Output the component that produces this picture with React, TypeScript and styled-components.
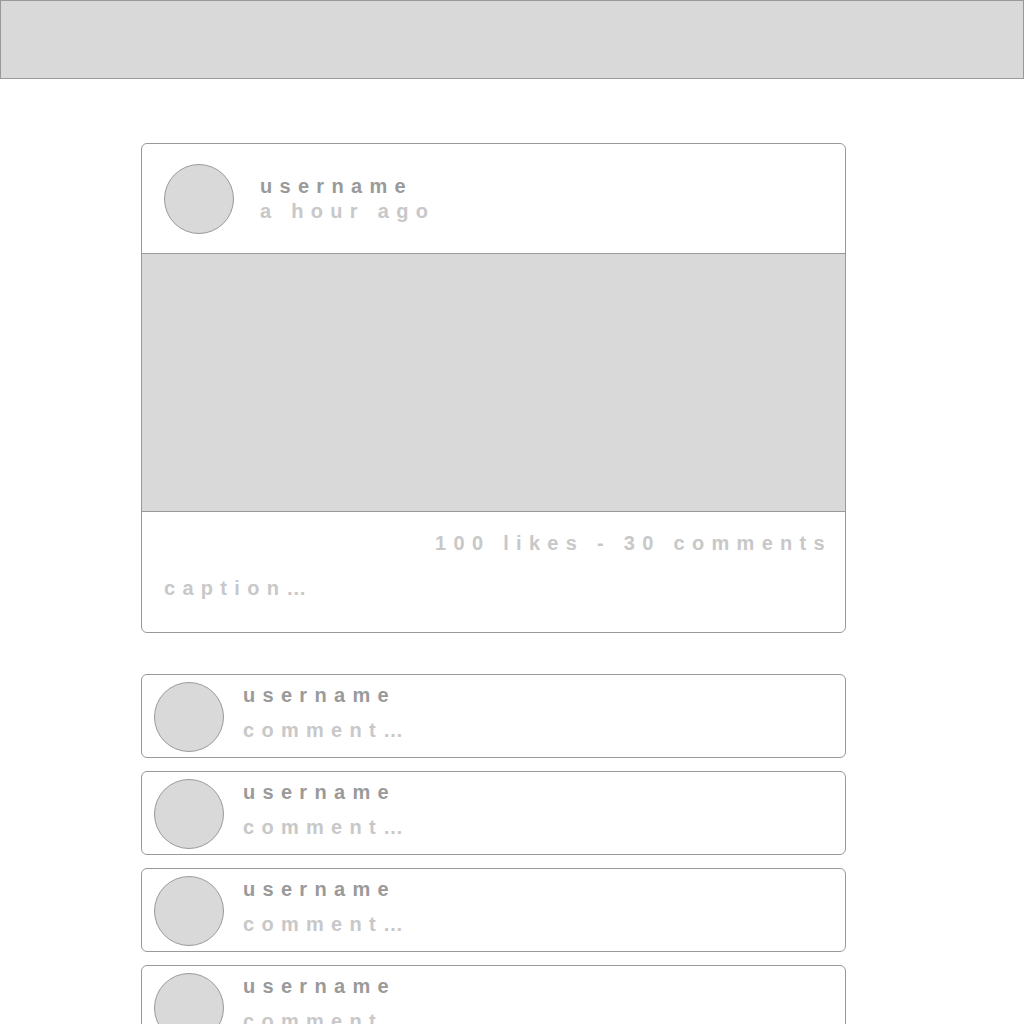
import React from "react";
import styled, { createGlobalStyle } from "styled-components";

const Global = createGlobalStyle`
  html, body { margin: 0; padding: 0; background: #fff; }
  body { font-family: "Liberation Sans", Arial, sans-serif; }
`;

const TopBar = styled.header`
  height: 77px;
  background: #d9d9d9;
  border: 1px solid #999;
`;

const Main = styled.main`
  width: 705px;
  margin: 64px 0 0 141px;
  display: flex;
  flex-direction: column;
`;

const Card = styled.section`
  border: 1px solid #999;
  border-radius: 6px;
  overflow: hidden;
  background: #fff;
`;

const PostHeader = styled.div`
  display: flex;
  align-items: center;
  gap: 26px;
  padding: 20px 22px 19px;
  border-bottom: 1px solid #999;
`;

const Avatar = styled.div`
  width: 68px;
  height: 68px;
  border-radius: 50%;
  background: #d9d9d9;
  border: 1px solid #999;
  flex-shrink: 0;
`;

const Meta = styled.div<{ $gap: number; $top?: boolean }>`
  display: flex;
  flex-direction: column;
  gap: ${(p) => p.$gap}px;
  margin-top: -1px;
  ${(p) => (p.$top ? "align-self: flex-start; margin-top: 1px;" : "")}
`;

const Label = styled.span<{ $muted?: boolean }>`
  font-weight: 700;
  font-size: 20px;
  line-height: 24px;
  letter-spacing: 7.3px;
  color: ${(p) => (p.$muted ? "#c8c8c8" : "#9a9a9a")};
  white-space: nowrap;
`;

const Picture = styled.div`
  height: 257px;
  background: #d9d9d9;
  border-bottom: 1px solid #999;
`;

const PostFooter = styled.div`
  display: flex;
  flex-direction: column;
  padding: 19px 13px 32px 22px;
  gap: 21px;
`;

const Stats = styled(Label)`
  align-self: flex-end;
`;

const Comments = styled.div`
  display: flex;
  flex-direction: column;
  gap: 13px;
  margin-top: 41px;
`;

const CommentCard = styled(Card)`
  display: flex;
  align-items: center;
  gap: 19px;
  padding: 7px 12px 5px;
`;

const comments = [0, 1, 2, 3];

export default function App() {
  return (
    <>
      <Global />
      <TopBar />
      <Main>
        <Card>
          <PostHeader>
            <Avatar />
            <Meta $gap={1}>
              <Label>username</Label>
              <Label $muted>a hour ago</Label>
            </Meta>
          </PostHeader>
          <Picture />
          <PostFooter>
            <Stats $muted>100 likes - 30 comments</Stats>
            <Label $muted>caption…</Label>
          </PostFooter>
        </Card>
        <Comments>
          {comments.map((i) => (
            <CommentCard key={i}>
              <Avatar />
              <Meta $gap={11} $top>
                <Label>username</Label>
                <Label $muted>comment…</Label>
              </Meta>
            </CommentCard>
          ))}
        </Comments>
      </Main>
    </>
  );
}
